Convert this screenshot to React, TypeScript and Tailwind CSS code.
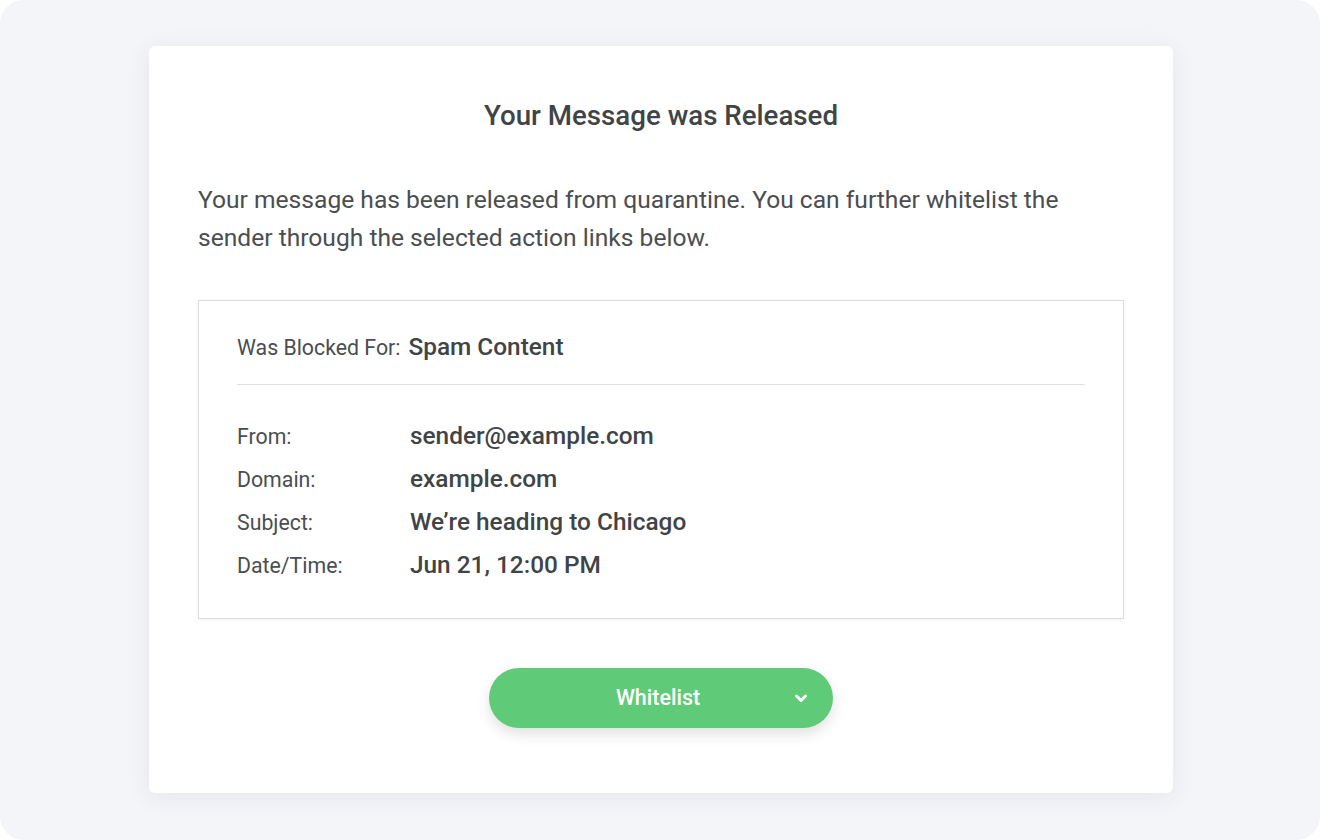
import React from "react";

export default function App() {
  const rows = [
    ["From:", "sender@example.com"],
    ["Domain:", "example.com"],
    ["Subject:", "We’re heading to Chicago"],
    ["Date/Time:", "Jun 21, 12:00 PM"],
  ];
  return (
    <div className="w-[1320px] h-[840px] bg-white" style={{ fontFamily: "Roboto, 'Noto Sans', sans-serif" }}>
      <div className="w-full h-full rounded-[24px] bg-[#f4f5f9] pt-[46px] pl-[149px]">
        <div className="w-[1024px] h-[747px] bg-white rounded-[6px] shadow-[0_4px_24px_rgba(40,45,70,0.08)] px-[49px] pt-[52px] text-[#45494c]">
          <h1 className="text-center text-[27.7px] leading-[36px] font-medium text-[#3f4447]">Your Message was Released</h1>
          <p className="mt-[47px] text-[24.6px] leading-[38px] text-[#4a4e51] pr-[30px]">
            Your message has been released from quarantine. You can further whitelist the sender through the selected action links below.
          </p>
          <div className="mt-[43px] border border-[#dcdde0] shadow-[0_1px_3px_rgba(0,0,0,0.06)] h-[319px] px-[38px] pt-[28px]">
            <div className="flex items-baseline h-[34px]">
              <span className="text-[21.3px] text-[#4a4e51]">Was Blocked For:</span>
              <span className="ml-[8px] text-[24.4px] font-medium text-[#3f4447]">Spam Content</span>
            </div>
            <div className="mt-[21px] h-px bg-[#dfe0e3]" />
            <div className="mt-[33px] flex flex-col gap-[11px]">
              {rows.map(([k, v]) => (
                <div key={k} className="flex items-baseline h-[32px]">
                  <span className="w-[173px] text-[21.3px] text-[#4a4e51]">{k}</span>
                  <span className="text-[24.4px] font-medium text-[#3f4447]">{v}</span>
                </div>
              ))}
            </div>
          </div>
          <div className="mt-[49px] flex justify-center">
            <button className="relative w-[344px] h-[60px] rounded-full bg-[#5fca78] text-white text-[21.5px] font-medium shadow-[0_6px_14px_rgba(0,0,0,0.12)] flex items-center justify-center pr-[6px]">
              Whitelist
              <svg className="absolute right-[24px] top-1/2 -translate-y-1/2" width="16" height="16" viewBox="0 0 16 16">
                <path d="M3.5 6l4.5 4.5 4.5-4.5" fill="none" stroke="white" strokeWidth="3" strokeLinecap="round" strokeLinejoin="round" />
              </svg>
            </button>
          </div>
        </div>
      </div>
    </div>
  );
}
